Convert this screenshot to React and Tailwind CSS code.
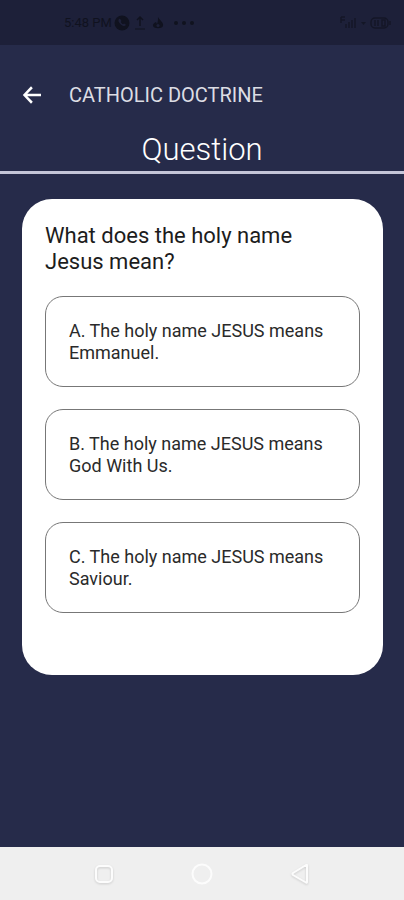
const options = [
  { id: "A", text: "The holy name JESUS means Emmanuel." },
  { id: "B", text: "The holy name JESUS means God With Us." },
  { id: "C", text: "The holy name JESUS means Saviour." },
];

function StatusBar() {
  return (
    <div className="flex h-[45px] items-center justify-between bg-[#1d2039] pl-16 pr-3 text-[#10121f]">
      <div className="flex items-center">
        <span className="text-[13px] leading-4">5:48 PM</span>
        <svg className="ml-0.5 size-4" viewBox="0 0 16 16" aria-hidden="true">
          <circle cx="8" cy="8" r="7.5" fill="currentColor" />
          <path d="M5 4c-1 1-.6 3 1.400 5s4 2.600 5 1.600l.5-.8-1.800-1.300-1 .7c-1-.4-1.900-1.300-2.300-2.300l.7-1L6 3.700z" fill="#1d2039" />
        </svg>
        <svg className="ml-0.5 size-4" viewBox="0 0 16 16" fill="none" stroke="currentColor" strokeWidth="1.500" aria-hidden="true">
          <path d="M8 11V2M5 5l3-3 3 3" />
          <path d="M3 14h10" strokeWidth="1" />
        </svg>
        <svg className="ml-0.5 size-4" viewBox="0 0 16 16" aria-hidden="true">
          <path d="M8 2c1 3 6 5 5 9-1 3-9 3-10 0-.5-2 1-3 3-4l1 2C8 7 8 4 8 2z" fill="currentColor" />
          <circle cx="8" cy="10.500" r="1.500" fill="#1d2039" />
        </svg>
        <svg className="ml-1.5 h-4 w-6" viewBox="0 0 24 16" fill="currentColor" aria-hidden="true">
          <circle cx="4" cy="8" r="2" />
          <circle cx="12" cy="8" r="2" />
          <circle cx="20" cy="8" r="2" />
        </svg>
      </div>
      <svg className="h-4 w-[52px] opacity-70" viewBox="0 0 52 16" fill="none" stroke="currentColor" strokeWidth="1.500" aria-hidden="true">
        <path d="M1 2h4M1 5h4M1 2v6M6 13V9M9 13V7M12 13V5M15 13V3" />
        <path d="M21 7h5l-2.500 3z" fill="currentColor" stroke="none" />
        <rect x="31" y="3" width="17" height="10" rx="4" />
        <path d="M35 5v6M38 5v6M42 5h3v6h-3zM50 6v4" />
      </svg>
    </div>
  );
}

function NavBar() {
  return (
    <nav className="flex h-[53px] items-center justify-center gap-[74px] bg-[#efefef] text-[#fcfcfc]">
      <button type="button" aria-label="Recent apps">
        <svg className="size-6 drop-shadow-[0_1px_1px_#00000026]" viewBox="0 0 24 24" fill="none" stroke="currentColor" strokeWidth="2">
          <rect x="4" y="4" width="16" height="16" rx="4" />
        </svg>
      </button>
      <button type="button" aria-label="Home">
        <svg className="size-6" viewBox="0 0 24 24" fill="none" stroke="currentColor" strokeWidth="2">
          <circle cx="12" cy="12" r="9.500" />
        </svg>
      </button>
      <button type="button" aria-label="Back">
        <svg className="size-6 drop-shadow-[0_1px_1px_#00000026]" viewBox="0 0 24 24" fill="none" stroke="currentColor" strokeWidth="2" strokeLinejoin="round">
          <path d="M19 3v17q0 1-1 .5L5 13q-1-1 0-2L18 3z" />
        </svg>
      </button>
    </nav>
  );
}

export default function App() {
  return (
    <div className="flex min-h-screen flex-col bg-[#262b4a] font-[Roboto,sans-serif]">
      <StatusBar />
      <header className="border-b-3 border-[#c4c5d8]">
        <div className="flex h-[100px] items-center gap-[25px] px-5">
          <button type="button" aria-label="Go back" className="text-white">
            <svg className="size-6" viewBox="0 0 24 24" fill="currentColor">
              <path d="M21 10.700H7.300l5.500-5.500L11 3.300 2.800 12l8.200 8.700 1.800-2-5.500-5.400H21z" />
            </svg>
          </button>
          <h1 className="text-xl text-[#dcdde4]">CATHOLIC DOCTRINE</h1>
        </div>
        <h2 className="-mt-4 text-center text-[31px] leading-[42px] font-light text-white">Question</h2>
      </header>
      <main className="flex-1 pt-[25px] pr-[21px] pl-[22px]">
        <section className="rounded-[30px] bg-white px-[23px] pt-6 pb-[62px]">
          <p className="pr-10 text-[22px] leading-[26px] text-[#1c1c1c]">What does the holy name Jesus mean?</p>
          <div className="mt-[21px] flex flex-col gap-[22px]">
            {options.map((option) => (
              <button
                key={option.id}
                type="button"
                className="rounded-[18px] border border-[#777777] px-[23px] pt-[23px] pb-[22px] text-left text-[18px] leading-[22px] text-[#2a2a2a]"
              >
                {`${option.id}. ${option.text}`}
              </button>
            ))}
          </div>
        </section>
      </main>
      <NavBar />
    </div>
  );
}
